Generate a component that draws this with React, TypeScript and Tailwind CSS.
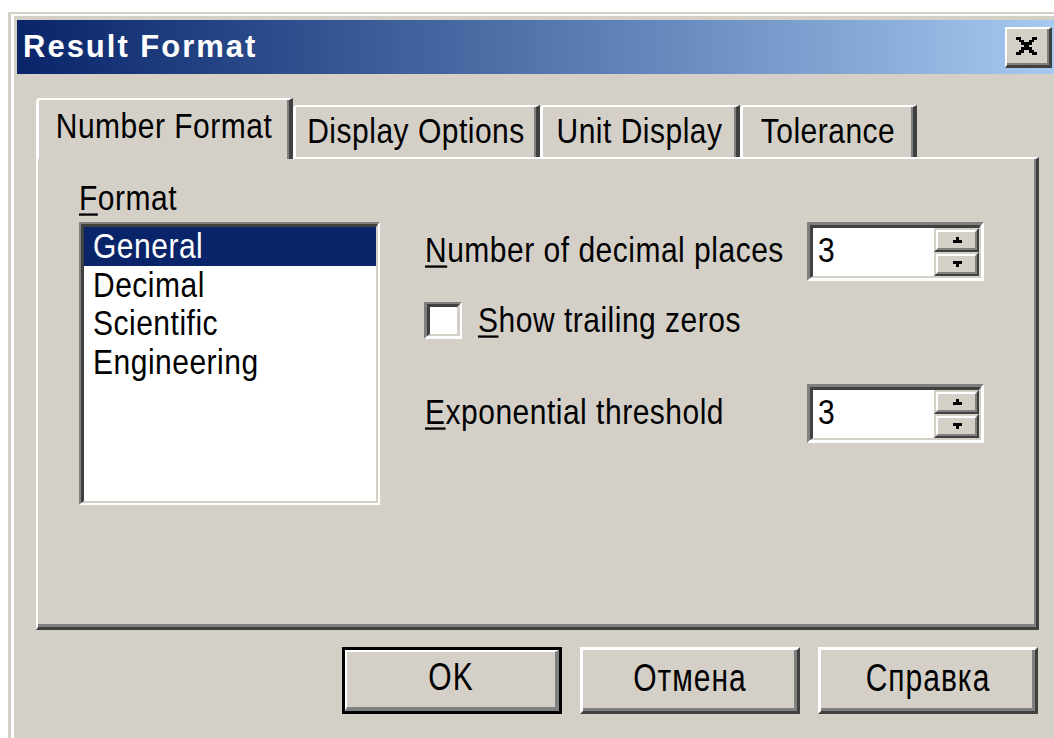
import type { ReactNode } from "react";
import clsx from "clsx";

const sans = "font-['Liberation_Sans',Arial,sans-serif]";

const tabs = [
  { label: "Number Format", width: "w-[257px]", active: true },
  { label: "Display Options", width: "w-[247px]", active: false },
  { label: "Unit Display", width: "w-[200px]", active: false },
  { label: "Tolerance", width: "w-[177px]", active: false },
];

const formats = ["General", "Decimal", "Scientific", "Engineering"];

// 8x7 bitmap of the classic caption close glyph
const closeRows = [
  "11000011",
  "01100110",
  "00111100",
  "00011000",
  "00111100",
  "01100110",
  "11000011",
];

// The system font is a bit taller than Liberation Sans, so stretch glyphs around the baseline
function Txt({ children, tall = false }: { children: ReactNode; tall?: boolean }) {
  return (
    <span
      className={clsx(
        "inline-block origin-[50%_80%]",
        tall ? "scale-y-[1.3] tracking-[1px]" : "scale-y-[1.15]"
      )}
    >
      {children}
    </span>
  );
}

function Key({ children }: { children: ReactNode }) {
  return <u className="underline decoration-2 underline-offset-[3px]">{children}</u>;
}

function CloseGlyph() {
  return (
    <svg width="21" height="18" viewBox="0 0 8 7" shapeRendering="crispEdges">
      {closeRows.flatMap((row, y) =>
        row.split("").map((c, x) =>
          c === "1" ? (
            <rect key={`${x}-${y}`} x={x} y={y} width="1.05" height="1.05" fill="#000" />
          ) : null
        )
      )}
    </svg>
  );
}

function Arrow({ up }: { up?: boolean }) {
  return (
    <svg width="10" height="6" viewBox="0 0 3 2" shapeRendering="crispEdges">
      {up ? (
        <>
          <rect x="1" y="0" width="1" height="1.02" fill="#000" />
          <rect x="0" y="1" width="3" height="1" fill="#000" />
        </>
      ) : (
        <>
          <rect x="0" y="0" width="3" height="1.02" fill="#000" />
          <rect x="1" y="1" width="1" height="1" fill="#000" />
        </>
      )}
    </svg>
  );
}

function SpinButton({ up }: { up?: boolean }) {
  return (
    <div className="h-[24px] border-2 border-t-[#d4d0c8] border-l-[#d4d0c8] border-r-[#404040] border-b-[#404040]">
      <div className="h-full flex items-center justify-center bg-[#d4d0c8] border-2 border-t-white border-l-white border-r-[#808080] border-b-[#808080]">
        <Arrow up={up} />
      </div>
    </div>
  );
}

function Spin({ value }: { value: string }) {
  return (
    <div className="w-[177px] h-[59px] border-[3px] border-t-[#808080] border-l-[#808080] border-r-white border-b-white">
      <div className="h-full flex bg-white border-t-[3px] border-l-[3px] border-r-2 border-b-2 border-t-[#404040] border-l-[#404040] border-r-[#d4d0c8] border-b-[#d4d0c8]">
        <div className="flex-1 flex items-center pl-[5px] leading-[34px]">
          <Txt>{value}</Txt>
        </div>
        <div className="w-[45px] flex flex-col">
          <SpinButton up />
          <SpinButton />
        </div>
      </div>
    </div>
  );
}

function Checkbox() {
  return (
    <div className="w-[38px] h-[37px] border-t-2 border-l-[3px] border-r-2 border-b-[3px] border-t-[#808080] border-l-[#808080] border-r-white border-b-white">
      <div className="h-full bg-white border-t-[3px] border-l-[3px] border-r-[3px] border-b-2 border-t-[#404040] border-l-[#404040] border-r-[#d4d0c8] border-b-[#d4d0c8]" />
    </div>
  );
}

function PushButton({ label, isDefault }: { label: string; isDefault?: boolean }) {
  if (isDefault) {
    return (
      <div className="w-[220px] h-[67px] border-[3px] border-black">
        <div className="h-full flex items-center justify-center leading-[34px] border-t-2 border-l-2 border-r-4 border-b-4 border-t-white border-l-white border-r-[#808080] border-b-[#808080]">
          <Txt tall>{label}</Txt>
        </div>
      </div>
    );
  }
  return (
    <div className="w-[220px] h-[67px] flex items-center justify-center leading-[34px] border-t-[3px] border-l-[3px] border-r-[3px] border-b-[3px] border-t-white border-l-white border-r-[#404040] border-b-[#404040] shadow-[inset_-3px_-3px_0_#808080]">
      <Txt tall>{label}</Txt>
    </div>
  );
}

export default function App() {
  return (
    <div className={clsx("w-[1054px] h-[738px] overflow-hidden bg-white pl-[8px] pt-[12px] text-black text-[30px] tracking-[0.5px]", sans)}>
      <div className="w-[1100px] h-[760px] border-l-[3px] border-t-2 border-[#d4d0c8]">
        <div className="h-full bg-[#d4d0c8] border-l-[3px] border-t-2 border-white pl-[3px] pt-[4px]">
          {/* caption */}
          <div className="w-[1039px] h-[54px] flex items-center justify-between pl-[6px] pr-[4px] bg-linear-to-r from-[#0a246a] to-[#a6caf0]">
            <span className="text-white font-bold text-[31px] tracking-[2px]">Result Format</span>
            <div className="w-[47px] h-[41px] flex items-center justify-center pr-[3px] pb-[2px] bg-[#d4d0c8] border-t-2 border-l-2 border-r-[3px] border-b-[3px] border-t-white border-l-white border-r-[#404040] border-b-[#404040] shadow-[inset_-2px_-2px_0_#808080]">
              <CloseGlyph />
            </div>
          </div>

          <div className="ml-[19px] mt-[24px] w-[1003px]">
            {/* tab strip */}
            <div className="relative z-10 flex items-end h-[61px] -mb-[2px]">
              {tabs.map((t) =>
                t.active ? (
                  <div
                    key={t.label}
                    className={clsx(
                      t.width,
                      "h-[61px] pt-[11px] text-center leading-[34px] bg-[#d4d0c8] rounded-tl-[4px] border-t-2 border-l-[3px] border-r-[4px] border-t-white border-l-white border-r-[#404040] shadow-[inset_-2px_0_0_#808080]"
                    )}
                  >
                    <Txt>{t.label}</Txt>
                  </div>
                ) : (
                  <div
                    key={t.label}
                    className={clsx(
                      t.width,
                      "h-[52px] mb-[2px] pt-[9px] text-center leading-[34px] rounded-tl-[4px] border-t-2 border-l-[3px] border-r-[4px] border-t-white border-l-white border-r-[#404040] shadow-[inset_-2px_0_0_#808080]"
                    )}
                  >
                    <Txt>{t.label}</Txt>
                  </div>
                )
              )}
            </div>

            {/* page */}
            <div className="h-[473px] flex pl-[41px] pt-[24px] border-t-2 border-l-2 border-r-[3px] border-b-[3px] border-t-white border-l-white border-r-[#404040] border-b-[#404040] shadow-[inset_-2px_-3px_0_#808080]">
              <div className="flex flex-col">
                <div className="h-[34px] leading-[34px]">
                  <Txt>
                    <Key>F</Key>ormat
                  </Txt>
                </div>
                <div className="mt-[5px] w-[301px] h-[283px] border-2 border-t-[#808080] border-l-[#808080] border-r-white border-b-white">
                  <div className="h-full bg-white border-t-[3px] border-l-[3px] border-r-2 border-b-2 border-t-[#404040] border-l-[#404040] border-r-[#d4d0c8] border-b-[#d4d0c8]">
                    {formats.map((f, i) => (
                      <div
                        key={f}
                        className={clsx(
                          "h-[38.5px] pl-[9px] pt-[4px] leading-[34.5px]",
                          i === 0 && "bg-[#0a246a] text-white"
                        )}
                      >
                        <Txt>{f}</Txt>
                      </div>
                    ))}
                  </div>
                </div>
              </div>

              <div className="ml-[44px] mt-[39px] flex flex-col">
                <div className="h-[59px] flex items-center">
                  <div className="w-[383px] pl-[1px] leading-[34px]">
                    <Txt>
                      <Key>N</Key>umber of decimal places
                    </Txt>
                  </div>
                  <Spin value="3" />
                </div>

                <div className="mt-[21px] h-[37px] flex items-center">
                  <Checkbox />
                  <div className="ml-[16px] leading-[34px] pt-[2px]">
                    <Txt>
                      <Key>S</Key>how trailing zeros
                    </Txt>
                  </div>
                </div>

                <div className="mt-[45px] h-[59px] flex items-center">
                  <div className="w-[383px] pl-[1px] leading-[34px]">
                    <Txt>
                      <Key>E</Key>xponential threshold
                    </Txt>
                  </div>
                  <Spin value="3" />
                </div>
              </div>
            </div>

            {/* dialog buttons */}
            <div className="mt-[17px] flex justify-end gap-[18px] pr-[1px]">
              <PushButton label="OK" isDefault />
              <PushButton label="Отмена" />
              <PushButton label="Справка" />
            </div>
          </div>
        </div>
      </div>
    </div>
  );
}
